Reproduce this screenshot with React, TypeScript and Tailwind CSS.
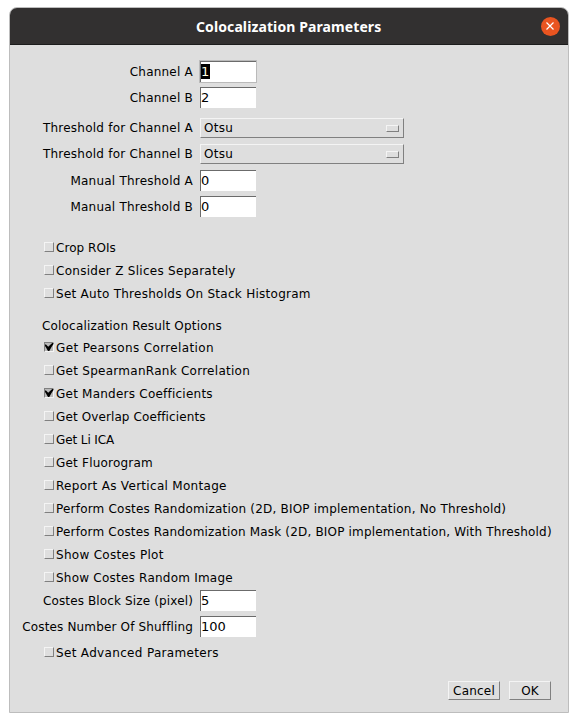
type FieldProps = { label: string; labelClass?: string; value: string; focused?: boolean };

function Field({ label, labelClass = 'tracking-[0.22px]', value, focused = false }: FieldProps) {
  return (
    <div className="flex h-[26px] items-start pt-[2px]">
      <label className={`w-[183px] shrink-0 text-right leading-[22px] whitespace-nowrap ${labelClass}`}>{label}</label>
      <div
        className={`ml-[7px] h-[21px] w-[56px] border-t border-l border-[#6b6b6b] bg-white text-[13px] ${
          focused ? 'outline outline-[#bababa]' : ''
        }`}
      >
        <span className={`mt-[2px] block h-[15px] w-fit leading-[15px] ${focused ? 'bg-black pr-px text-[#ffffe0]' : ''}`}>
          {value}
        </span>
      </div>
    </div>
  );
}

function Choice({ label, value }: { label: string; value: string }) {
  return (
    <div className="flex h-[26px] items-start pt-[2px]">
      <label className="w-[183px] shrink-0 text-right leading-[20px] tracking-[0.24px] whitespace-nowrap">{label}</label>
      <div className="ml-[7px] flex h-[20px] w-[204px] items-center justify-between border border-t-[#f4f4f4] border-r-[#808080] border-b-[#808080] border-l-[#f4f4f4] pr-[4px] pl-[3px]">
        <span className="tracking-[0.3px]">{value}</span>
        <span className="h-[7px] w-[13px] border border-t-[#f4f4f4] border-r-[#808080] border-b-[#808080] border-l-[#f4f4f4]" />
      </div>
    </div>
  );
}

function Check({ label, labelClass, checked = false }: { label: string; labelClass: string; checked?: boolean }) {
  return (
    <div className="flex h-[23px] items-start pl-[34px]">
      {checked ? (
        <span className="mt-[6px] h-[10px] w-[10px] border border-t-[#808080] border-r-[#f4f4f4] border-b-[#f4f4f4] border-l-[#808080] bg-[#bababa]">
          <svg viewBox="0 0 8 8" className="h-[8px] w-[8px] overflow-visible">
            <path d="M0 1.5 L1 1.5 L3.2 3.8 L7.2 0 L8.5 0 L8.5 1 L6.5 4 L4.3 8 L3 8 L1 4.5 L0 3 Z" fill="#000" />
          </svg>
        </span>
      ) : (
        <span className="mt-[6px] h-[10px] w-[10px] border border-t-[#f4f4f4] border-r-[#808080] border-b-[#808080] border-l-[#f4f4f4]" />
      )}
      <span className={`mt-[2px] ml-[2px] whitespace-nowrap ${labelClass}`}>{label}</span>
    </div>
  );
}

function Button({ label, className }: { label: string; className: string }) {
  return (
    <button
      className={`h-[19px] border border-t-[#f4f4f4] border-r-[#808080] border-b-[#808080] border-l-[#f4f4f4] pt-px text-center leading-[16px] ${className}`}
    >
      {label}
    </button>
  );
}

export default function App() {
  return (
    <div className="h-[722px] w-[578px] bg-white pt-[7px] pl-[9px]">
      <div className="flex h-[706px] w-[560px] flex-col overflow-hidden rounded-t-[8px] border border-[#bdbdbd] bg-[#dedede]">
        <header className="flex h-[37px] shrink-0 items-center border-b border-[#1c1c1c] bg-[#323030]">
          <h1 className="ml-[186px] w-[186px] pt-px font-['Noto_Sans',sans-serif] text-[14px] font-bold tracking-[0.1px] whitespace-nowrap text-white">
            Colocalization Parameters
          </h1>
          <button aria-label="Close" className="ml-[158.5px] flex h-[19px] w-[19px] items-center justify-center rounded-full bg-[#e95420]">
            <svg viewBox="0 0 8 8" className="h-[8px] w-[8px]">
              <path d="M.5 .5 L7.5 7.5 M7.5 .5 L.5 7.5" stroke="#fff" strokeWidth="1.2" fill="none" />
            </svg>
          </button>
        </header>
        <main className="pt-[14px] font-['DejaVu_Sans',sans-serif] text-[12px] leading-[20px] text-black">
          <Field label="Channel A" value="1" focused />
          <Field label="Channel B" value="2" />
          <div className="mt-[5px]">
            <Choice label="Threshold for Channel A" value="Otsu" />
            <Choice label="Threshold for Channel B" value="Otsu" />
            <Field label="Manual Threshold A" value="0" />
            <Field label="Manual Threshold B" value="0" />
          </div>
          <div className="mt-[16px]">
            <Check label="Crop ROIs" labelClass="tracking-[0.05px]" />
            <Check label="Consider Z Slices Separately" labelClass="tracking-[0.28px]" />
            <Check label="Set Auto Thresholds On Stack Histogram" labelClass="tracking-[0.27px]" />
          </div>
          <h2 className="mt-[9px] h-[22px] pl-[32px] leading-[24px] tracking-[0.18px]">Colocalization Result Options</h2>
          <div className="h-[252px]">
            <Check label="Get Pearsons Correlation" labelClass="tracking-[0.37px]" checked />
            <Check label="Get SpearmanRank Correlation" labelClass="tracking-[0.27px]" />
            <Check label="Get Manders Coefficients" labelClass="tracking-[0.23px]" checked />
            <Check label="Get Overlap Coefficients" labelClass="tracking-[0.11px]" />
            <Check label="Get Li ICA" labelClass="tracking-[-0.1px]" />
            <Check label="Get Fluorogram" labelClass="tracking-[0.21px]" />
            <Check label="Report As Vertical Montage" labelClass="tracking-[0.3px]" />
            <Check label="Perform Costes Randomization (2D, BIOP implementation, No Threshold)" labelClass="tracking-[0.2px]" />
            <Check label="Perform Costes Randomization Mask (2D, BIOP implementation, With Threshold)" labelClass="tracking-[0.18px]" />
            <Check label="Show Costes Plot" labelClass="tracking-[0.3px]" />
            <Check label="Show Costes Random Image" labelClass="tracking-[0.23px]" />
          </div>
          <Field label="Costes Block Size (pixel)" labelClass="tracking-[0.14px]" value="5" />
          <Field label="Costes Number Of Shuffling" labelClass="tracking-[0.15px]" value="100" />
          <div className="mt-px">
            <Check label="Set Advanced Parameters" labelClass="tracking-[0.33px]" />
          </div>
          <div className="mt-[17px] flex justify-end gap-[9px] pr-[17px]">
            <Button label="Cancel" className="w-[52px] tracking-[0.2px]" />
            <Button label="OK" className="w-[42px]" />
          </div>
        </main>
      </div>
    </div>
  );
}
